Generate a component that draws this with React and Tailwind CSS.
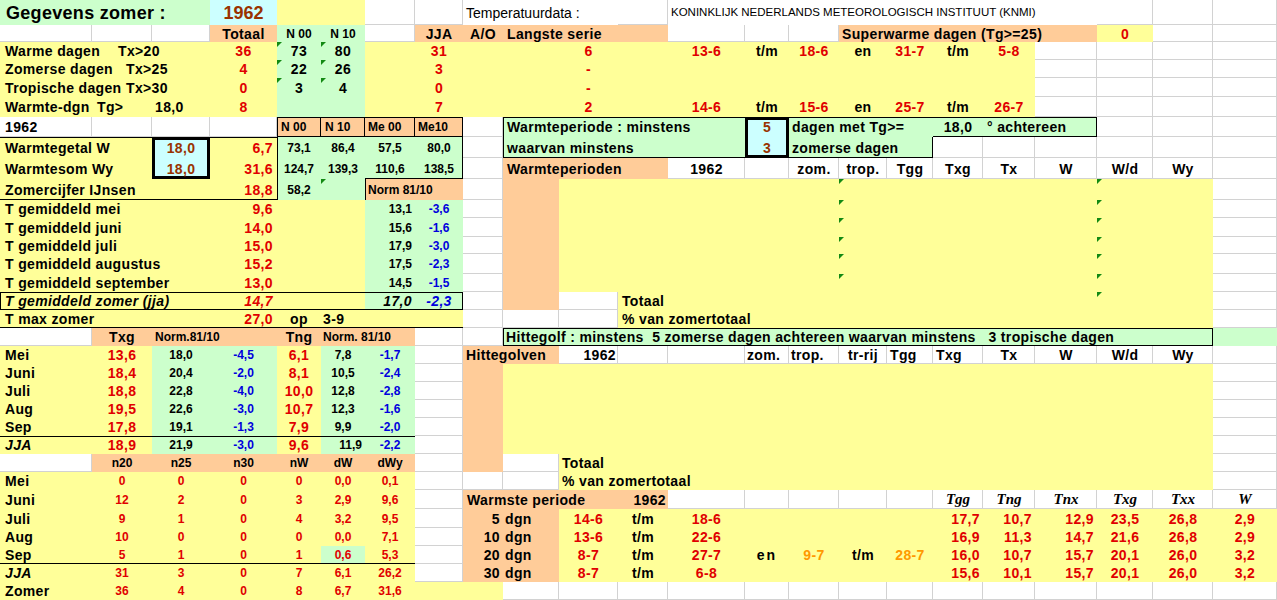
import React from "react";

// spreadsheet grid: 23 columns, 32 rows
const COLS = "grid-cols-[92px_60px_58px_67px_44px_44px_50px_48px_40px_56px_59px_50px_77px_44px_50px_48px_46px_50px_52px_62px_56px_60px_64px]";
const ROWS = "grid-rows-[25px_17px_18px_18px_19px_20px_20px_21px_21px_21px_18px_19px_17px_20px_18px_18px_18px_18px_18px_18px_18px_18px_18px_18px_18px_18px_19px_19px_18px_18px_18px_18px]";

const Y = "bg-[#ffff99]";
const G = "bg-[#ccffcc]";
const O = "bg-[#ffcc99]";
const B = "bg-[#ccffff]";
const W = "bg-white";

const red = " text-[#e00000]";
const blue = " text-[#0000dd]";
const brown = " text-[#993300]";
const orange = " text-[#ff9900]";

const L = "text-[14px] font-bold tracking-[0.35px]";
const S = "text-[12px] font-bold";
const c = " justify-center";
const l = " pl-[4px]";
const r = " justify-end pr-[4px]";
const TIMES = "font-['Liberation_Serif',serif] italic font-bold text-[15px] justify-center";

// background blocks (colour fills hide the gridlines)
const fills = [
  ["col-start-1 col-span-3 row-start-1", G],
  ["col-start-4 row-start-1", B],
  ["col-start-5 col-span-2 row-start-1", Y],
  ["col-start-9 col-span-3 row-start-1", W],
  ["col-start-13 col-span-8 row-start-1", W],
  ["col-start-4 row-start-2", O],
  ["col-start-5 col-span-2 row-start-2", G],
  ["col-start-8 col-span-5 row-start-2", O],
  ["col-start-16 col-span-5 row-start-2", O],
  ["col-start-21 row-start-2", Y],
  ["col-start-1 col-span-4 row-start-3 row-span-4", Y],
  ["col-start-5 col-span-2 row-start-3 row-span-4", G],
  ["col-start-7 col-span-13 row-start-3 row-span-4", Y],
  ["col-start-5 col-span-4 row-start-7", O],
  ["col-start-10 col-span-4 row-start-7 row-span-2", G],
  ["col-start-15 col-span-6 row-start-7", G],
  ["col-start-15 col-span-3 row-start-8", G],
  ["col-start-1 col-span-2 row-start-8 row-span-2", Y],
  ["col-start-4 row-start-8 row-span-2", Y],
  ["col-start-5 col-span-4 row-start-8 row-span-2", G],
  ["col-start-10 col-span-3 row-start-9", O],
  ["col-start-1 col-span-4 row-start-10", Y],
  ["col-start-5 col-span-2 row-start-10", G],
  ["col-start-7 col-span-2 row-start-10", O],
  ["col-start-1 col-span-6 row-start-11 row-span-6", Y],
  ["col-start-7 col-span-2 row-start-11 row-span-6", G],
  ["col-start-10 row-start-10 row-span-7", O],
  ["col-start-11 col-span-12 row-start-10 row-span-6", Y],
  ["col-start-12 col-span-11 row-start-16 row-span-2", Y],
  ["col-start-1 col-span-8 row-start-17", Y],
  ["col-start-2 col-span-6 row-start-18", O],
  ["col-start-10 col-span-14 row-start-18", G],
  ["col-start-1 col-span-2 row-start-19 row-span-6", Y],
  ["col-start-3 col-span-2 row-start-19 row-span-6", G],
  ["col-start-5 row-start-19 row-span-6", Y],
  ["col-start-6 col-span-2 row-start-19 row-span-6", G],
  ["col-start-9 col-span-2 row-start-19", O],
  ["col-start-9 row-start-20 row-span-6", O],
  ["col-start-10 col-span-13 row-start-20 row-span-5", Y],
  ["col-start-11 col-span-12 row-start-25 row-span-2", Y],
  ["col-start-2 col-span-6 row-start-25", O],
  ["col-start-1 col-span-7 row-start-26 row-span-6", Y],
  ["col-start-6 row-start-30", G],
  ["col-start-1 col-span-9 row-start-32", Y],
  ["col-start-9 col-span-4 row-start-27", O],
  ["col-start-9 col-span-2 row-start-28 row-span-4", O],
  ["col-start-11 col-span-13 row-start-28 row-span-4", Y],
];

// black rules and boxes
const lines = [
  ["col-start-1 col-span-4 row-start-8", "border-t border-black"],
  ["col-start-1 col-span-4 row-start-10", "border-b border-black"],
  ["col-start-5 col-span-4 row-start-7 row-span-3", "border-x border-t border-black"],
  ["col-start-5 col-span-4 row-start-7", "border-b border-black"],
  ["col-start-5 row-start-7", "border-r border-black"],
  ["col-start-6 row-start-7", "border-r border-black"],
  ["col-start-7 row-start-7", "border-r border-black"],
  ["col-start-7 col-span-2 row-start-9", "border-b border-black"],
  ["col-start-5 row-start-10", "border-l border-black"],
  ["col-start-7 row-start-10", "border-l border-black"],
  ["col-start-1 col-span-8 row-start-16", "border border-black"],
  ["col-start-1 col-span-8 row-start-17", "border-b border-black"],
  ["col-start-1 col-span-7 row-start-24", "border-t border-black"],
  ["col-start-1 col-span-7 row-start-30", "border-b border-black"],
  ["col-start-10 col-span-11 row-start-7", "border-t border-black"],
  ["col-start-10 row-start-7 row-span-2", "border-l border-black"],
  ["col-start-10 col-span-8 row-start-8", "border-b border-black"],
  ["col-start-20 row-start-7", "border-r border-black"],
  ["col-start-18 col-span-3 row-start-7", "border-b border-black"],
  ["col-start-17 row-start-8", "border-r border-black"],
  ["col-start-10 col-span-13 row-start-18", "border border-black"],
  ["col-start-3 row-start-8 row-span-2", B + " border-[3px] border-black"],
  ["col-start-14 row-start-7 row-span-2", B + " border-[3px] border-black"],
];

const R = (row, cells) =>
  cells.map(([col, text, cls, tri]) => ({ p: `${col} ${row}`, text, cls, tri }));

const lab = (w, a, b) => (
  <>
    <span className={w}>{a}</span>
    {b}
  </>
);

const hdr = (row) =>
  R(row, [
    ["col-start-15", "zom.", L + c],
    ["col-start-16", "trop.", L + c],
    ["col-start-17", "Tgg", L + c],
    ["col-start-18", "Txg", L + c],
    ["col-start-19", "Tx", L + c],
    ["col-start-20", "W", L + c],
    ["col-start-21", "W/d", L + c],
    ["col-start-22", "Wy", L + c],
  ]);

const tgem = (row, name, v, n, d, tri) =>
  R(row, [
    ["col-start-1 col-span-3", name, L + " pl-[5px]"],
    ["col-start-4", v, L + r + red],
    ["col-start-7", n, S + " justify-end pr-[3px]"],
    ["col-start-8", d, S + c + blue],
    ["col-start-16", "", "", tri],
    ["col-start-21", "", "", true],
  ]);

const month = (row, name, a, b, cc, d, e, f, it) =>
  R(row, [
    ["col-start-1", name, L + " pl-[5px]" + (it ? " italic" : "")],
    ["col-start-2", a, L + c + red],
    ["col-start-3", b, S + c],
    ["col-start-4", cc, S + c + blue],
    ["col-start-5", d, L + c + red],
    ["col-start-6", e, S + (it ? " justify-end pr-[3px]" : c)],
    ["col-start-7", f, S + c + blue],
  ]);

const counts = (row, name, vals, it) =>
  R(row, [
    ["col-start-1", name, L + " pl-[5px]" + (it ? " italic" : "")],
    ["col-start-2", vals[0], S + c + red],
    ["col-start-3", vals[1], S + c + red],
    ["col-start-4", vals[2], S + c + red],
    ["col-start-5", vals[3], S + c + red],
    ["col-start-6", vals[4], S + c + red],
    ["col-start-7", vals[5], S + c + red],
  ]);

const warmst = (row, n, from, to, vals) =>
  R(row, [
    ["col-start-9", n, L + " justify-end pr-[3px]"],
    ["col-start-10", "dgn", L + " pl-[2px]"],
    ["col-start-11", from, L + c + red],
    ["col-start-12", "t/m", L + c],
    ["col-start-13", to, L + c + red],
    ["col-start-18", vals[0], L + " justify-end pr-[3px]" + red],
    ["col-start-19", vals[1], L + " justify-end pr-[3px]" + red],
    ["col-start-20", vals[2], L + " justify-end pr-[3px]" + red],
    ["col-start-21", vals[3], L + c + red],
    ["col-start-22", vals[4], L + c + red],
    ["col-start-23", vals[5], L + c + red],
  ]);

const texts = [
  ...R("row-start-1", [
    ["col-start-1 col-span-3", "Gegevens zomer :", "text-[18px] font-bold tracking-[0.3px] pl-[6px]"],
    ["col-start-4", "1962", "text-[18px] font-bold" + c + brown],
    ["col-start-9 col-span-3", "Temperatuurdata :", "text-[14px] pl-[3px]"],
    ["col-start-13 col-span-8", "KONINKLIJK NEDERLANDS METEOROLOGISCH INSTITUUT (KNMI)", "text-[11.5px] pl-[3px]"],
  ]),
  ...R("row-start-2", [
    ["col-start-4", "Totaal", L + c],
    ["col-start-5", "N 00", S + c],
    ["col-start-6", "N 10", S + c],
    ["col-start-8", "JJA", L + c],
    ["col-start-9", "A/O", L + c],
    ["col-start-10 col-span-3", "Langste serie", L + l],
    ["col-start-16 col-span-5", "Superwarme dagen (Tg>=25)", L + " pl-[3px]"],
    ["col-start-21", "0", L + c + red],
  ]),
  ...R("row-start-3", [
    ["col-start-1 col-span-3", lab("inline-block w-[113px]", "Warme dagen", "Tx>20"), L + " pl-[5px]"],
    ["col-start-4", "36", L + c + red],
    ["col-start-5", "73", L + c, true],
    ["col-start-6", "80", L + c, true],
    ["col-start-8", "31", L + c + red],
    ["col-start-11", "6", L + c + red],
    ["col-start-13", "13-6", L + c + red],
    ["col-start-14", "t/m", L + c],
    ["col-start-15", "18-6", L + c + red],
    ["col-start-16", "en", L + c],
    ["col-start-17", "31-7", L + c + red],
    ["col-start-18", "t/m", L + c],
    ["col-start-19", "5-8", L + c + red],
  ]),
  ...R("row-start-4", [
    ["col-start-1 col-span-3", lab("inline-block w-[121px]", "Zomerse dagen", "Tx>25"), L + " pl-[5px]"],
    ["col-start-4", "4", L + c + red],
    ["col-start-5", "22", L + c, true],
    ["col-start-6", "26", L + c, true],
    ["col-start-8", "3", L + c + red],
    ["col-start-11", "-", L + c + red],
  ]),
  ...R("row-start-5", [
    ["col-start-1 col-span-3", lab("inline-block w-[121px]", "Tropische dagen", "Tx>30"), L + " pl-[5px]"],
    ["col-start-4", "0", L + c + red],
    ["col-start-5", "3", L + c, true],
    ["col-start-6", "4", L + c, true],
    ["col-start-8", "0", L + c + red],
    ["col-start-11", "-", L + c + red],
  ]),
  ...R("row-start-6", [
    ["col-start-1 col-span-2", lab("inline-block w-[92px]", "Warmte-dgn", "Tg>"), L + " pl-[5px]"],
    ["col-start-3", "18,0", L + " pl-[3px]"],
    ["col-start-4", "8", L + c + red],
    ["col-start-8", "7", L + c + red],
    ["col-start-11", "2", L + c + red],
    ["col-start-13", "14-6", L + c + red],
    ["col-start-14", "t/m", L + c],
    ["col-start-15", "15-6", L + c + red],
    ["col-start-16", "en", L + c],
    ["col-start-17", "25-7", L + c + red],
    ["col-start-18", "t/m", L + c],
    ["col-start-19", "26-7", L + c + red],
  ]),
  ...R("row-start-7", [
    ["col-start-1", "1962", L + " pl-[5px]"],
    ["col-start-5", "N 00", S + l],
    ["col-start-6", "N 10", S + l],
    ["col-start-7", "Me 00", S + " pl-[3px]"],
    ["col-start-8", "Me10", S + " pl-[3px]"],
    ["col-start-10 col-span-4", "Warmteperiode : minstens", L + l],
    ["col-start-14", "5", L + c + brown],
    ["col-start-15 col-span-3", "dagen met Tg>=", L + " pl-[3px]"],
    ["col-start-18", "18,0", L + c],
    ["col-start-19 col-span-2", "° achtereen", L + l],
  ]),
  ...R("row-start-8", [
    ["col-start-1 col-span-2", "Warmtegetal W", L + " pl-[5px]"],
    ["col-start-3", "18,0", L + c + brown],
    ["col-start-4", "6,7", L + r + red],
    ["col-start-5", "73,1", S + c],
    ["col-start-6", "86,4", S + c],
    ["col-start-7", "57,5", S + c],
    ["col-start-8", "80,0", S + c],
    ["col-start-10 col-span-4", "waarvan minstens", L + l],
    ["col-start-14", "3", L + c + brown],
    ["col-start-15 col-span-3", "zomerse dagen", L + " pl-[3px]"],
  ]),
  ...R("row-start-9", [
    ["col-start-1 col-span-2", "Warmtesom Wy", L + " pl-[5px]"],
    ["col-start-3", "18,0", L + c + brown],
    ["col-start-4", "31,6", L + r + red],
    ["col-start-5", "124,7", S + c],
    ["col-start-6", "139,3", S + c],
    ["col-start-7", "110,6", S + c],
    ["col-start-8", "138,5", S + c],
    ["col-start-10 col-span-3", "Warmteperioden", L + l],
    ["col-start-13", "1962", L + c],
  ]),
  ...hdr("row-start-9"),
  ...R("row-start-10", [
    ["col-start-1 col-span-3", "Zomercijfer IJnsen", L + " pl-[5px]"],
    ["col-start-4", "18,8", L + r + red],
    ["col-start-5", "58,2", S + c],
    ["col-start-6", "", "", true],
    ["col-start-7 col-span-2", "Norm 81/10", S + " pl-[3px]"],
    ["col-start-16", "", "", true],
    ["col-start-21", "", "", true],
  ]),
  ...tgem("row-start-11", "T gemiddeld mei", "9,6", "13,1", "-3,6", true),
  ...tgem("row-start-12", "T gemiddeld juni", "14,0", "15,6", "-1,6", true),
  ...tgem("row-start-13", "T gemiddeld juli", "15,0", "17,9", "-3,0", true),
  ...tgem("row-start-14", "T gemiddeld augustus", "15,2", "17,5", "-2,3", true),
  ...tgem("row-start-15", "T gemiddeld september", "13,0", "14,5", "-1,5", true),
  ...R("row-start-16", [
    ["col-start-1 col-span-3", "T gemiddeld zomer (jja)", L + " italic pl-[5px]"],
    ["col-start-4", "14,7", L + " italic" + r + red],
    ["col-start-7", "17,0", L + " italic justify-end pr-[3px]"],
    ["col-start-8", "-2,3", L + " italic" + c + blue],
    ["col-start-12 col-span-11", "Totaal", L + l],
    ["col-start-21", "", "", true],
  ]),
  ...R("row-start-17", [
    ["col-start-1 col-span-3", "T max zomer", L + " pl-[5px]"],
    ["col-start-4", "27,0", L + r + red],
    ["col-start-5", "op", L + c],
    ["col-start-6", "3-9", L + " pl-[2px]"],
    ["col-start-12 col-span-11", "% van zomertotaal", L + l],
  ]),
  ...R("row-start-18", [
    ["col-start-2", "Txg", L + c],
    ["col-start-3 col-span-2", "Norm.81/10", S + " pl-[3px]"],
    ["col-start-5", "Tng", L + c],
    ["col-start-6 col-span-2", "Norm. 81/10", S + " pl-[2px]"],
    ["col-start-10 col-span-13", "Hittegolf : minstens  5 zomerse dagen achtereen waarvan minstens   3 tropische dagen", L + " pl-[3px]"],
  ]),
  ...month("row-start-19", "Mei", "13,6", "18,0", "-4,5", "6,1", "7,8", "-1,7"),
  ...R("row-start-19", [
    ["col-start-9 col-span-2", "Hittegolven", L + " pl-[3px]"],
    ["col-start-11", "1962", L + " justify-end pr-[2px]"],
    ["col-start-14", "zom.", L + " pl-[2px]"],
    ["col-start-15", "trop.", L + " pl-[2px]"],
    ["col-start-16", "tr-rij", L + c],
    ["col-start-17", "Tgg", L + " pl-[3px]"],
    ["col-start-18", "Txg", L + " pl-[3px]"],
    ["col-start-19", "Tx", L + c],
    ["col-start-20", "W", L + c],
    ["col-start-21", "W/d", L + c],
    ["col-start-22", "Wy", L + c],
  ]),
  ...month("row-start-20", "Juni", "18,4", "20,4", "-2,0", "8,1", "10,5", "-2,4"),
  ...month("row-start-21", "Juli", "18,8", "22,8", "-4,0", "10,0", "12,8", "-2,8"),
  ...month("row-start-22", "Aug", "19,5", "22,6", "-3,0", "10,7", "12,3", "-1,6"),
  ...month("row-start-23", "Sep", "17,8", "19,1", "-1,3", "7,9", "9,9", "-2,0"),
  ...month("row-start-24", "JJA", "18,9", "21,9", "-3,0", "9,6", "11,9", "-2,2", true),
  ...R("row-start-25", [
    ["col-start-2", "n20", S + c],
    ["col-start-3", "n25", S + c],
    ["col-start-4", "n30", S + c],
    ["col-start-5", "nW", S + c],
    ["col-start-6", "dW", S + c],
    ["col-start-7", "dWy", S + c],
    ["col-start-11 col-span-12", "Totaal", L + " pl-[3px]"],
  ]),
  ...counts("row-start-26", "Mei", ["0", "0", "0", "0", "0,0", "0,1"]),
  ...R("row-start-26", [["col-start-11 col-span-12", "% van zomertotaal", L + " pl-[3px]"]]),
  ...counts("row-start-27", "Juni", ["12", "2", "0", "3", "2,9", "9,6"]),
  ...R("row-start-27", [
    ["col-start-9 col-span-3", "Warmste periode", L + l],
    ["col-start-12", "1962", L + " justify-end pr-[2px]"],
    ["col-start-18", "Tgg", TIMES],
    ["col-start-19", "Tng", TIMES],
    ["col-start-20", "Tnx", TIMES],
    ["col-start-21", "Txg", TIMES],
    ["col-start-22", "Txx", TIMES],
    ["col-start-23", "W", TIMES],
  ]),
  ...counts("row-start-28", "Juli", ["9", "1", "0", "4", "3,2", "9,5"]),
  ...warmst("row-start-28", "5", "14-6", "18-6", ["17,7", "10,7", "12,9", "23,5", "26,8", "2,9"]),
  ...counts("row-start-29", "Aug", ["10", "0", "0", "0", "0,0", "7,1"]),
  ...warmst("row-start-29", "10", "13-6", "22-6", ["16,9", "11,3", "14,7", "21,6", "26,8", "2,9"]),
  ...counts("row-start-30", "Sep", ["5", "1", "0", "1", "0,6", "5,3"]),
  ...warmst("row-start-30", "20", "8-7", "27-7", ["16,0", "10,7", "15,7", "20,1", "26,0", "3,2"]),
  ...R("row-start-30", [
    ["col-start-14", "en", L + c + " tracking-[2px]"],
    ["col-start-15", "9-7", L + c + orange],
    ["col-start-16", "t/m", L + c],
    ["col-start-17", "28-7", L + c + orange],
  ]),
  ...counts("row-start-31", "JJA", ["31", "3", "0", "7", "6,1", "26,2"], true),
  ...warmst("row-start-31", "30", "8-7", "6-8", ["15,6", "10,1", "15,7", "20,1", "26,0", "3,2"]),
  ...counts("row-start-32", "Zomer", ["36", "4", "0", "8", "6,7", "31,6"]),
];

export default function App() {
  return (
    <div className="grid w-[1277px] h-[600px] overflow-hidden bg-white text-black font-['Liberation_Sans',Arial,sans-serif]">
      {/* gridlines */}
      <div className={`grid ${COLS} ${ROWS} col-start-1 row-start-1`}>
        {Array.from({ length: 32 * 23 }).map((_, i) => (
          <div key={i} className="border-r border-b border-[#d2d2d2]" />
        ))}
      </div>

      {/* sheet content */}
      <div className={`grid ${COLS} ${ROWS} col-start-1 row-start-1`}>
        {fills.map(([p, cls], i) => (
          <div key={"f" + i} className={`${p} ${cls}`} />
        ))}
        {lines.map(([p, cls], i) => (
          <div key={"l" + i} className={`${p} ${cls}`} />
        ))}
        {texts.map((t, i) => (
          <div
            key={"t" + i}
            className={`${t.p} ${t.cls} relative flex items-center whitespace-pre leading-none min-w-0`}
          >
            {t.tri && (
              <span className="absolute left-0 top-0 border-t-[5px] border-r-[5px] border-t-[#138a13] border-r-transparent" />
            )}
            {t.text}
          </div>
        ))}
      </div>
    </div>
  );
}
